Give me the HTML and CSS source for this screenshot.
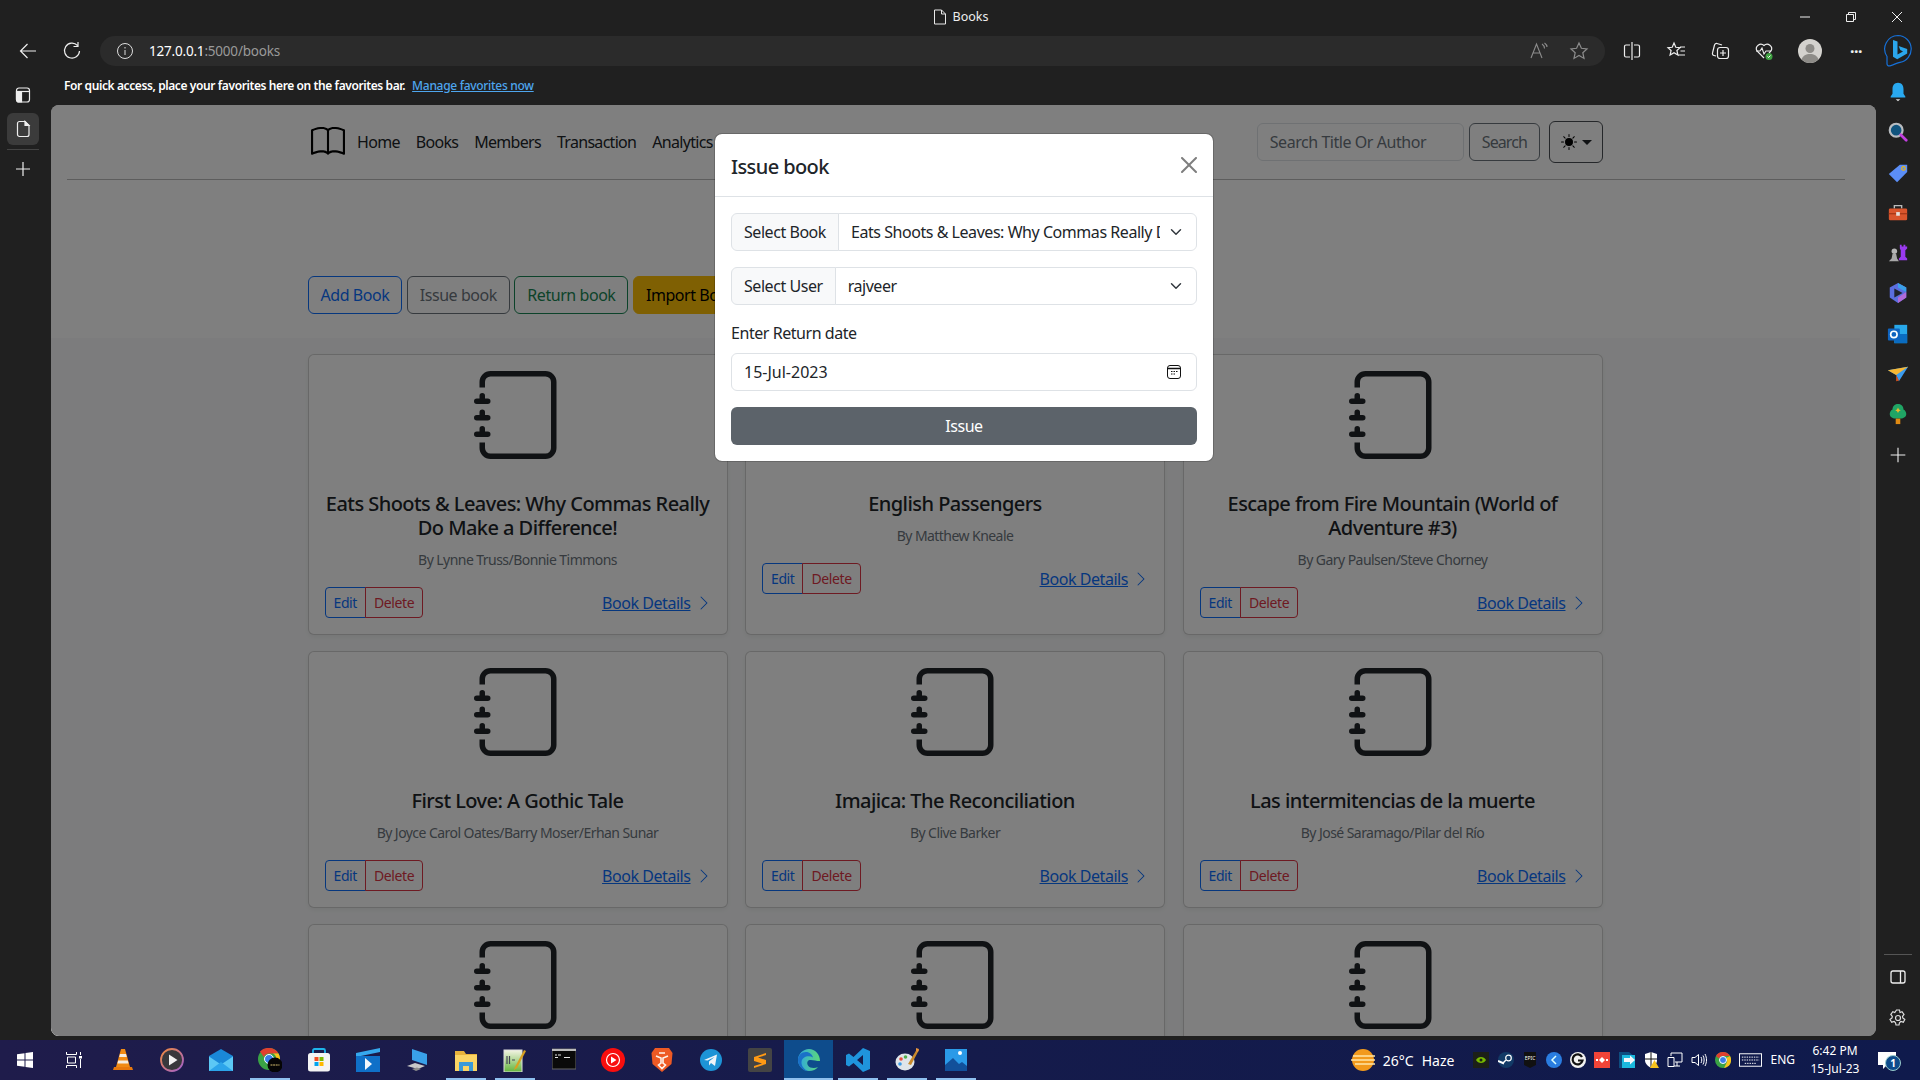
FILE: index.html
```html
<!DOCTYPE html>
<html lang="en">
<head>
    <meta charset="UTF-8">
    <meta name="viewport" content="width=device-width, initial-scale=1.0">
    <title>Books</title>
    <link rel="stylesheet" href="styles.css">
</head>
<body>
    <svg class="defs" width="0" height="0">
        <defs>
            <linearGradient id="ring" x1="0" y1="0" x2="1" y2="1"><stop offset="0" stop-color="#f08a3c"/><stop offset="1" stop-color="#a060d0"/></linearGradient>
            <linearGradient id="notepad" x1="0" y1="0" x2="0" y2="1"><stop offset="0" stop-color="#f4f4e4"/><stop offset="1" stop-color="#62b53a"/></linearGradient>
            <linearGradient id="edge" x1="0" y1="0" x2="1" y2="0"><stop offset="0" stop-color="#2fa8e0"/><stop offset="1" stop-color="#5cd87a"/></linearGradient>
        </defs>
        <symbol id="journal" viewBox="0 0 16 16">
            <path d="M3 0h10a2 2 0 0 1 2 2v12a2 2 0 0 1-2 2H3a2 2 0 0 1-2-2v-1h1v1a1 1 0 0 0 1 1h10a1 1 0 0 0 1-1V2a1 1 0 0 0-1-1H3a1 1 0 0 0-1 1v1H1V2a2 2 0 0 1 2-2z"/>
            <path d="M1 5v-.5a.5.5 0 0 1 1 0V5h.5a.5.5 0 0 1 0 1h-2a.5.5 0 0 1 0-1H1zm0 3v-.5a.5.5 0 0 1 1 0V8h.5a.5.5 0 0 1 0 1h-2a.5.5 0 0 1 0-1H1zm0 3v-.5a.5.5 0 0 1 1 0v.5h.5a.5.5 0 0 1 0 1h-2a.5.5 0 0 1 0-1H1z"/>
        </symbol>
        <symbol id="chevron" viewBox="0 0 16 16">
            <path fill-rule="evenodd" d="M4.646 1.646a.5.5 0 0 1 .708 0l6 6a.5.5 0 0 1 0 .708l-6 6a.5.5 0 0 1-.708-.708L10.293 8 4.646 2.354a.5.5 0 0 1 0-.708z"/>
        </symbol>
    </svg>

    <div class="titlebar">
        <div class="title-text">
            <svg class="ico16" viewBox="0 0 16 16" fill="none" stroke="#e8e8e8"><path d="M2.500 1h7L13.500 5v10h-11zM9.500 1v4h4"/></svg>
            <span>Books</span>
        </div>
        <div class="window-controls">
            <svg viewBox="0 0 12 12" fill="none" stroke="#eee"><path d="M1 6h10"/></svg>
            <svg viewBox="0 0 12 12" fill="none" stroke="#eee"><path d="M1.500 3.500h7v7h-7zM3.500 3.500v-2h7v7h-2"/></svg>
            <svg viewBox="0 0 12 12" fill="none" stroke="#eee"><path d="M1 1l10 10M11 1L1 11"/></svg>
        </div>
    </div>

    <div class="toolbar">
        <div class="nav-buttons">
            <svg viewBox="0 0 20 20" fill="none" stroke="#eee" stroke-width="1.200"><path d="M18 10H2.500M9.500 3l-7 7 7 7"/></svg>
            <svg viewBox="0 0 20 20" fill="none" stroke="#eee" stroke-width="1.200"><path d="M15.500 4.500A7.500 7.500 0 1 0 17.500 10M16 1v4.500h-4.500"/></svg>
        </div>
        <div class="urlbar">
            <svg class="ico18" viewBox="0 0 18 18" fill="none" stroke="#ddd"><circle cx="9" cy="9" r="7.500"/><path d="M9 8v5M9 5v1.500"/></svg>
            <span class="url"><b>127.0.0.1</b>:5000/books</span>
            <svg class="ico20 url-action" viewBox="0 0 20 20" fill="none" stroke="#8c8c8c" stroke-width="1.100"><path d="M2 17L7.500 3 13 17M4 12h7M13 3c1.500 1 2.500 2.500 2.500 4.500M15.500 2c1.500 1 2.500 2.500 2.500 4"/></svg>
            <svg class="ico20 url-action" viewBox="0 0 20 20" fill="none" stroke="#8c8c8c" stroke-width="1.200"><path d="M10 2l2.400 5.300 5.600.6-4.200 3.800 1.200 5.700L10 14.500l-5 2.900 1.200-5.700L2 7.900l5.600-.6z"/></svg>
        </div>
        <div class="tool-icons">
            <svg class="ico20" viewBox="0 0 20 20" fill="none" stroke="#eee" stroke-width="1.200"><path d="M10 1v18M8 4H4a1.500 1.500 0 0 0-1.500 1.500v9A1.500 1.500 0 0 0 4 16h4M12 4h4a1.500 1.500 0 0 1 1.500 1.500v9A1.500 1.500 0 0 1 16 16h-4"/></svg>
            <svg class="ico20" viewBox="0 0 20 20" fill="none" stroke="#eee" stroke-width="1.200"><path d="M8 2l1.800 4.300 4.200.4-3.100 2.800 1 4.500L8 11.700l-3.900 2.300 1-4.500L2 6.700l4.200-.4zM14 6h5M14.500 10H19M12.500 14H19"/></svg>
            <svg class="ico20" viewBox="0 0 20 20" fill="none" stroke="#eee" stroke-width="1.200"><path d="M6 15l-2-.5a2 2 0 0 1-1.500-2.500l2-8A2 2 0 0 1 7 2.500l5 1.500"/><rect x="7.500" y="6.500" width="11" height="11" rx="2.500"/><path d="M13 9v6M10 12h6"/></svg>
            <svg class="ico20" viewBox="0 0 20 20" fill="none"><path d="M10 17L3 10a4.500 4.500 0 0 1 7-5.500A4.500 4.500 0 0 1 17 10l-2 2" stroke="#eee" stroke-width="1.200"/><path d="M2 10h4l2-3 2 6 2-3h5" stroke="#eee" stroke-width="1.100"/><circle cx="15" cy="15.500" r="3.500" fill="#3fa142"/><path d="M13.500 15.500l1 1 2-2" stroke="#fff"/></svg>
            <svg class="avatar" viewBox="0 0 24 24"><circle cx="12" cy="12" r="12" fill="#d4d2ce"/><circle cx="12" cy="9.500" r="4.500" fill="#8e8c88"/><path d="M3.500 20.500C5 16.500 8 15 12 15s7 1.500 8.500 5.500A12 12 0 0 1 3.500 20.500z" fill="#8e8c88"/></svg>
            <span class="dots">···</span>
        </div>
        <svg class="bing" viewBox="0 0 30 34" fill="none">
            <path d="M15 1.500a13.500 13.500 0 0 1 2 26.800c-3 .5-6 2.500-10 3.500-2 .4-3-.5-3-2V22.500A13.500 13.500 0 0 1 15 1.500z" stroke="#1670d8" stroke-width="1.200"/>
            <path d="M10 6l4.500 1.600v13l5.500-3.200-2.700-1.300-1.700-4.100 8.600 3v4.400l-10 5.800-4.200-2.400z" fill="#2ba6ec"/>
        </svg>
    </div>

    <div class="browser-body">
        <aside class="left-rail">
            <svg class="ico20" viewBox="0 0 20 20" fill="none" stroke="#eee" stroke-width="1.200"><rect x="3.500" y="3" width="13" height="14" rx="2.500"/><path d="M3.500 6.500h13"/><path d="M3.500 6.500h5V17H6a2.500 2.500 0 0 1-2.500-2.500z" fill="#eee"/></svg>
            <div class="rail-active">
                <svg class="ico20" viewBox="0 0 20 20" fill="none" stroke="#eee" stroke-width="1.200"><path d="M6.500 2.500h5.500l4 4v9a2 2 0 0 1-2 2H6.500a2 2 0 0 1-2-2v-11a2 2 0 0 1 2-2z"/><path d="M12 2.500l4 4h-4z" fill="#eee"/></svg>
            </div>
            <div class="rail-line"></div>
            <svg class="ico20" viewBox="0 0 20 20" fill="none" stroke="#eee" stroke-width="1.200"><path d="M10 3v14M3 10h14"/></svg>
        </aside>

        <div class="center-col">
            <div class="favbar">
                <span>For quick access, place your favorites here on the favorites bar.</span>
                <a href="#">Manage favorites now</a>
            </div>

            <main class="page">
                <div class="page-inner">
                    <header class="site-header">
                        <div class="container site-nav">
                            <svg class="logo" viewBox="0 0 16 16"><path d="M1 2.828c.885-.37 2.154-.769 3.388-.893 1.33-.134 2.458.063 3.112.752v9.746c-.935-.53-2.12-.603-3.213-.493-1.18.12-2.37.461-3.287.811V2.828zm7.5-.141c.654-.689 1.782-.886 3.112-.752 1.234.124 2.503.523 3.388.893v9.923c-.918-.35-2.107-.692-3.287-.81-1.094-.111-2.278-.039-3.213.492V2.687zM8 1.783C7.015.936 5.587.81 4.287.94c-1.514.153-3.042.672-3.994 1.105A.5.5 0 0 0 0 2.5v11a.5.5 0 0 0 .707.455c.882-.4 2.303-.881 3.68-1.02 1.409-.142 2.59.087 3.223.877a.5.5 0 0 0 .78 0c.633-.79 1.814-1.019 3.222-.877 1.378.139 2.8.62 3.681 1.02A.5.5 0 0 0 16 13.5v-11a.5.5 0 0 0-.293-.455c-.952-.433-2.48-.952-3.994-1.105C10.413.809 8.985.936 8 1.783z"/></svg>
                            <nav class="nav-links">
                                <a href="#">Home</a>
                                <a href="#">Books</a>
                                <a href="#">Members</a>
                                <a href="#">Transaction</a>
                                <a href="#">Analytics</a>
                            </nav>
                            <form class="search-form">
                                <input class="form-control search-input" type="text" placeholder="Search Title Or Author">
                                <button class="btn btn-outline-secondary" type="button">Search</button>
                            </form>
                            <button class="btn btn-outline-secondary theme-btn" type="button">
                                <svg class="ico16" viewBox="0 0 16 16"><path d="M8 12a4 4 0 1 0 0-8 4 4 0 0 0 0 8zM8 0a.5.5 0 0 1 .5.5v2a.5.5 0 0 1-1 0v-2A.5.5 0 0 1 8 0zm0 13a.5.5 0 0 1 .5.5v2a.5.5 0 0 1-1 0v-2A.5.5 0 0 1 8 13zm8-5a.5.5 0 0 1-.5.5h-2a.5.5 0 0 1 0-1h2a.5.5 0 0 1 .5.5zM3 8a.5.5 0 0 1-.5.5h-2a.5.5 0 0 1 0-1h2A.5.5 0 0 1 3 8zm10.657-5.657a.5.5 0 0 1 0 .707l-1.414 1.415a.5.5 0 1 1-.707-.708l1.414-1.414a.5.5 0 0 1 .707 0zm-9.193 9.193a.5.5 0 0 1 0 .707L3.05 13.657a.5.5 0 0 1-.707-.707l1.414-1.414a.5.5 0 0 1 .707 0zm9.193 2.121a.5.5 0 0 1-.707 0l-1.414-1.414a.5.5 0 0 1 .707-.707l1.414 1.414a.5.5 0 0 1 0 .707zM4.464 4.465a.5.5 0 0 1-.707 0L2.343 3.05a.5.5 0 1 1 .707-.707l1.414 1.414a.5.5 0 0 1 0 .708z"/></svg>
                                <span class="caret"></span>
                            </button>
                        </div>
                    </header>

                    <section class="container actions">
                        <button class="btn btn-outline-primary" type="button">Add Book</button>
                        <button class="btn btn-outline-secondary" type="button">Issue book</button>
                        <button class="btn btn-outline-success" type="button">Return book</button>
                        <button class="btn btn-warning" type="button">Import Books</button>
                    </section>

                    <section class="album">
                        <div class="container book-grid">
                            <article class="card">
                                <svg class="card-icon"><use href="#journal"/></svg>
                                <h5 class="card-title">Eats Shoots &amp; Leaves: Why Commas Really Do Make a Difference!</h5>
                                <p class="card-author">By Lynne Truss/Bonnie Timmons</p>
                                <div class="card-actions">
                                    <div class="btn-group"><a class="btn-sm edit" href="#">Edit</a><a class="btn-sm delete" href="#">Delete</a></div>
                                    <a class="details" href="#"><span>Book Details</span><svg class="ico16"><use href="#chevron"/></svg></a>
                                </div>
                            </article>
                            <article class="card">
                                <svg class="card-icon"><use href="#journal"/></svg>
                                <h5 class="card-title">English Passengers</h5>
                                <p class="card-author">By Matthew Kneale</p>
                                <div class="card-actions">
                                    <div class="btn-group"><a class="btn-sm edit" href="#">Edit</a><a class="btn-sm delete" href="#">Delete</a></div>
                                    <a class="details" href="#"><span>Book Details</span><svg class="ico16"><use href="#chevron"/></svg></a>
                                </div>
                            </article>
                            <article class="card">
                                <svg class="card-icon"><use href="#journal"/></svg>
                                <h5 class="card-title">Escape from Fire Mountain (World of Adventure #3)</h5>
                                <p class="card-author">By Gary Paulsen/Steve Chorney</p>
                                <div class="card-actions">
                                    <div class="btn-group"><a class="btn-sm edit" href="#">Edit</a><a class="btn-sm delete" href="#">Delete</a></div>
                                    <a class="details" href="#"><span>Book Details</span><svg class="ico16"><use href="#chevron"/></svg></a>
                                </div>
                            </article>
                            <article class="card">
                                <svg class="card-icon"><use href="#journal"/></svg>
                                <h5 class="card-title">First Love: A Gothic Tale</h5>
                                <p class="card-author">By Joyce Carol Oates/Barry Moser/Erhan Sunar</p>
                                <div class="card-actions">
                                    <div class="btn-group"><a class="btn-sm edit" href="#">Edit</a><a class="btn-sm delete" href="#">Delete</a></div>
                                    <a class="details" href="#"><span>Book Details</span><svg class="ico16"><use href="#chevron"/></svg></a>
                                </div>
                            </article>
                            <article class="card">
                                <svg class="card-icon"><use href="#journal"/></svg>
                                <h5 class="card-title">Imajica: The Reconciliation</h5>
                                <p class="card-author">By Clive Barker</p>
                                <div class="card-actions">
                                    <div class="btn-group"><a class="btn-sm edit" href="#">Edit</a><a class="btn-sm delete" href="#">Delete</a></div>
                                    <a class="details" href="#"><span>Book Details</span><svg class="ico16"><use href="#chevron"/></svg></a>
                                </div>
                            </article>
                            <article class="card">
                                <svg class="card-icon"><use href="#journal"/></svg>
                                <h5 class="card-title">Las intermitencias de la muerte</h5>
                                <p class="card-author">By José Saramago/Pilar del Río</p>
                                <div class="card-actions">
                                    <div class="btn-group"><a class="btn-sm edit" href="#">Edit</a><a class="btn-sm delete" href="#">Delete</a></div>
                                    <a class="details" href="#"><span>Book Details</span><svg class="ico16"><use href="#chevron"/></svg></a>
                                </div>
                            </article>
                            <article class="card card-stub"><svg class="card-icon"><use href="#journal"/></svg></article>
                            <article class="card card-stub"><svg class="card-icon"><use href="#journal"/></svg></article>
                            <article class="card card-stub"><svg class="card-icon"><use href="#journal"/></svg></article>
                        </div>
                    </section>
                </div>

                <div class="backdrop"></div>

                <div class="modal">
                    <div class="modal-header">
                        <h5 class="modal-title">Issue book</h5>
                        <svg class="modal-close" viewBox="0 0 16 16" fill="#000"><path d="M.293.293a1 1 0 0 1 1.414 0L8 6.586 14.293.293a1 1 0 1 1 1.414 1.414L9.414 8l6.293 6.293a1 1 0 0 1-1.414 1.414L8 9.414l-6.293 6.293a1 1 0 0 1-1.414-1.414L6.586 8 .293 1.707a1 1 0 0 1 0-1.414z"/></svg>
                    </div>
                    <form class="modal-body">
                        <div class="input-group">
                            <label class="input-group-text">Select Book</label>
                            <select class="form-select"><option>Eats Shoots &amp; Leaves: Why Commas Really Do Make a Difference!</option></select>
                        </div>
                        <div class="input-group">
                            <label class="input-group-text">Select User</label>
                            <select class="form-select"><option>rajveer</option></select>
                        </div>
                        <label class="form-label">Enter Return date</label>
                        <div class="date-field">
                            <input class="form-control date-input" type="text" value="15-Jul-2023">
                            <svg class="calendar" viewBox="0 0 14 14" fill="none" stroke="#111"><rect x=".5" y=".5" width="13" height="13" rx="2.500"/><path d="M.5 3.500h13" stroke-width="1.500"/><path d="M4 6.500h1.500M6.500 6.500H8M9 6.500h1.500M4 9h1.500M6.500 9H8" stroke-width="1.200"/></svg>
                        </div>
                        <button class="btn-issue" type="button">Issue</button>
                    </form>
                </div>
            </main>
        </div>

        <aside class="right-rail">
            <div class="rail-icons">
                <svg viewBox="0 0 24 24"><path d="M12 2c4 0 6 3 6 7v5l2 3v1H4v-1l2-3V9c0-4 2-7 6-7z" fill="#29a9f0"/><path d="M9.500 20h5l-2.500 2z" fill="#ddd"/></svg>
                <svg viewBox="0 0 24 24" fill="none"><circle cx="10" cy="10" r="7" stroke="#b8bcc0" stroke-width="2.400" fill="#10547e"/><path d="M15 15l6 6" stroke="#c23fe0" stroke-width="3" stroke-linecap="round"/></svg>
                <svg viewBox="0 0 24 24"><path d="M14 3h8v8L11 22 2 13z" fill="#5b8ef7"/><circle cx="18" cy="7" r="2" fill="#5b8ef7" stroke="#f5b800" stroke-width="1.200"/></svg>
                <svg viewBox="0 0 24 24"><path d="M8 7V4h8v3" fill="none" stroke="#bbb" stroke-width="1.500"/><rect x="2" y="7" width="20" height="13" rx="1.500" fill="#d9552c"/><rect x="2" y="12" width="20" height="1.500" fill="#a93a18"/><rect x="10" y="11" width="4" height="4" fill="#e6e0da"/></svg>
                <svg viewBox="0 0 24 24"><path d="M14 3h2v2h2V3h2v2h2v2l-2 2v7l2 2v2H13v-2l2-2V9l-1-2z" fill="#9a3af0"/><circle cx="8" cy="10" r="3" fill="#b5b5b5"/><path d="M6 13h4l1 5 2 3H2l3-3z" fill="#a8a8a8"/></svg>
                <svg viewBox="0 0 24 24"><path d="M12 1l9 5v11l-9 6-9-6V6z" fill="#5b6ee0"/><path d="M12 1l9 5v5l-9-5z" fill="#3aa0e8"/><path d="M12 23l9-6v-6l-9 6z" fill="#b06ad8"/><path d="M8 7l9 5-9 5z" fill="#20232e"/></svg>
                <svg viewBox="0 0 24 24"><path d="M8 2h14v20H8z" fill="#28a8ea"/><path d="M8 12h14v10H8z" fill="#0a6cc0"/><rect x="1" y="6" width="13" height="13" rx="1" fill="#0f64c0"/><circle cx="7.500" cy="12.500" r="3.500" fill="none" stroke="#fff" stroke-width="1.800"/></svg>
                <svg viewBox="0 0 24 24"><path d="M1 8l22-4-10 16-3-7z" fill="#3b9cf0"/><path d="M1 8l9 5 13-9z" fill="#f7b733"/><path d="M10 13v7l3-1z" fill="#d9531e"/></svg>
                <svg viewBox="0 0 24 24"><path d="M12 1c4 0 6 3 6 6 2 1 3 3 3 5 0 3-3 5-6 5H9c-3 0-6-2-6-5 0-2 1-4 3-5 0-3 2-6 6-6z" fill="#20a565"/><rect x="9.500" y="17" width="5" height="6" fill="#e08a12"/><path d="M12 5l1 2 2 1-2 1-1 2-1-2-2-1 2-1z" fill="#f2b92c"/></svg>
                <svg viewBox="0 0 24 24" fill="none" stroke="#eee" stroke-width="1.200"><path d="M12 4v16M4 12h16"/></svg>
            </div>
            <div class="rail-bottom">
                <div class="rail-rule"></div>
                <svg viewBox="0 0 20 20" fill="none" stroke="#eee" stroke-width="1.300"><rect x="3" y="4" width="14" height="12" rx="2"/><path d="M12.500 4v12"/></svg>
                <svg viewBox="0 0 20 20" fill="none" stroke="#ddd" stroke-width="1.200"><circle cx="10" cy="10" r="2.500"/><path d="M8.500 2h3l.5 2.500 2-.8 2 2.800-1.500 1.800.3 1.700 2 1.500-1.500 2.700-2.500-.7-1.300 1.200-.5 2.300h-3l-.5-2.300-1.300-1.200-2.500.7L2 11.500 4 10l.3-1.700L2.800 6.500l2-2.800 2 .8z"/></svg>
            </div>
        </aside>
    </div>

    <footer class="taskbar">
        <div class="task-apps">
            <span class="app"><svg class="app-small" viewBox="0 0 16 16" fill="#fff"><path d="M0 2.300l7.500-1.100v6.300H0zM8.500 1.100L16 0v7.500H8.500zM0 8.500h7.500v6.300L0 13.700zM8.500 8.500H16V16l-7.500-1.100z"/></svg></span>
            <span class="app"><svg class="app-small" viewBox="0 0 16 16" fill="none" stroke="#fff"><path d="M.5 0v2.500h10V0M.5 16v-2.500h10V16M1.500 5h8v6h-8zM14.500 0v3M14.500 7v9"/><rect x="13" y="4" width="3" height="2.500" fill="#fff" stroke="none"/></svg></span>
            <span class="app"><svg viewBox="0 0 24 24"><path d="M10 1h4l5 18H5z" fill="#f08a14"/><path d="M9 6h6l.8 3H8.200zM7.200 12.500h9.600l.8 3H6.400z" fill="#f4ece0"/><path d="M3 19h18l1 3H2z" fill="#e8780c"/></svg></span>
            <span class="app"><svg viewBox="0 0 24 24"><circle cx="12" cy="12" r="11" fill="#38383c" stroke="url(#ring)" stroke-width="1.800"/><path d="M9 6.500l8.500 5.500L9 17.500z" fill="#f2f2f2"/></svg></span>
            <span class="app"><svg viewBox="0 0 24 24"><path d="M0 8l12-7 12 7v15H0z" fill="#1a88d8"/><path d="M0 8.500l12 8 12-8V23H0z" fill="#5cc8f5"/><path d="M0 23l12-9 12 9z" fill="#2ca4ea"/></svg></span>
            <span class="app app-on"><svg viewBox="0 0 24 24"><circle cx="11" cy="11" r="11" fill="#3aa345"/><path d="M11 0a11 11 0 0 1 9.500 5.500H11A5.500 5.500 0 0 0 5.800 9L2 3.500A11 11 0 0 1 11 0z" fill="#e0402f"/><path d="M20.500 5.500A11 11 0 0 1 13 21.800l3-7a5.500 5.500 0 0 0-1-9.300z" fill="#f7c21c"/><circle cx="11" cy="11" r="4.500" fill="#3b7fea" stroke="#fff"/><circle cx="17" cy="17" r="7.500" fill="#050505"/><path d="M12.500 17h9" stroke="#d8c070" stroke-width="1" stroke-dasharray="2 .6"/></svg></span>
            <span class="app"><svg viewBox="0 0 24 24"><path d="M6 7V2.500A1.500 1.500 0 0 1 7.500 1h9A1.500 1.500 0 0 1 18 2.500V7" fill="none" stroke="#1eb4ea" stroke-width="1.800"/><rect x="1" y="5" width="22" height="18.500" rx="2.500" fill="#f4f4f4"/><rect x="7.500" y="9" width="4" height="4" fill="#f25022"/><rect x="12.500" y="9" width="4" height="4" fill="#7fba00"/><rect x="7.500" y="14" width="4" height="4" fill="#00a4ef"/><rect x="12.500" y="14" width="4" height="4" fill="#ffb900"/></svg></span>
            <span class="app"><svg viewBox="0 0 24 24"><path d="M0 5l24-5v4L0 9z" fill="#36a8ee"/><rect y="8" width="24" height="16" fill="#0f70c8"/><path d="M9 10l7 6-7 6z" fill="#f4f8fc"/></svg></span>
            <span class="app"><svg viewBox="0 0 24 24"><path d="M7 1l15 5v11L7 12z" fill="#39a0e8"/><path d="M2 18l8-3 10 3-7 3z" fill="#c8c8c8"/><path d="M7 21l5-1.500 4 1.500-5 2z" fill="#8c8c8c"/></svg></span>
            <span class="app app-on"><svg viewBox="0 0 24 24"><path d="M1 3h9l2 3h11v17H1z" fill="#e8b23c"/><path d="M1 7h22v16H1z" fill="#fbd464"/><rect x="5" y="14" width="14" height="9" fill="#3a9ad8"/><rect x="9" y="18" width="6" height="5" fill="#fbd464"/></svg></span>
            <span class="app app-on"><svg viewBox="0 0 24 24"><rect x="1" y="2" width="18" height="22" fill="url(#notepad)" stroke="#ddd"/><path d="M4 8v8M6.500 8v8M9 12h3" stroke="#445" stroke-width="1.200"/><path d="M12 19L21 2l2 1-9 17-3 2z" fill="#d8a020"/></svg></span>
            <span class="app"><svg viewBox="0 0 24 24"><rect y="1" width="24" height="20" fill="#0a0a0a" stroke="#666"/><rect y="1" width="24" height="2" fill="#bbb"/><path d="M3 7h2M6 7h3M3 9.500h3M12 9.500h6" stroke="#e8e8e8"/></svg></span>
            <span class="app"><svg viewBox="0 0 24 24"><circle cx="12" cy="12" r="12" fill="#f80e0e"/><circle cx="12" cy="12" r="6.500" fill="none" stroke="#fff" stroke-width="1.200"/><path d="M10 8.500l5.500 3.500-5.500 3.500z" fill="#fff"/></svg></span>
            <span class="app"><svg viewBox="0 0 24 24"><path d="M5 0h14l3.500 5-1 11L12 24 2.500 16l-1-11z" fill="#ee5a24"/><path d="M6 8l5 2v5l-2.500 2 3.500 3.500 3.500-3.500-2.500-2v-5l5-2M9 5h6" fill="none" stroke="#fdf2ea" stroke-width="1.600"/></svg></span>
            <span class="app"><svg viewBox="0 0 24 24"><circle cx="12" cy="12" r="11" fill="#1d94d6"/><path d="M5 12l13-5.500-2 11.500-4-3-2 2.500v-4l5.500-4.500-7 3.500z" fill="#eef4f8"/></svg></span>
            <span class="app"><svg viewBox="0 0 24 24"><rect width="24" height="24" rx="2" fill="#444"/><path d="M18 5L6 9v4l8 2.500L6 18v2l12-4v-4L10 9.500 18 7z" fill="#ff9a14"/></svg></span>
            <span class="app app-active"><svg viewBox="0 0 24 24"><path d="M23 13C23 6 18 1 12 1 6 1 1 6 1 12c0 6 5 11 11 11 4 0 7-1.500 9-4-3 1.500-8 1.500-10-1.500-1.500-2.500-.5-5 1.500-5.500 3.500-.5 6 1 10.500 1z" fill="url(#edge)"/><path d="M1 12c0-4.500 3.500-8 8-8 3.500 0 6.500 2.500 7 5.500-4-2.500-11-1-11.500 4.500-.2 3 1.500 6.500 6 9C6 22.500 1 18 1 12z" fill="#1a70c8"/></svg></span>
            <span class="app app-on"><svg viewBox="0 0 24 24"><path d="M17 0l7 3v18l-7 3-9.500-9L3 18.500 0 17V7l3-1.500L7.500 9zM17 7l-6 5 6 5z" fill="#1f94dc" fill-rule="evenodd"/></svg></span>
            <span class="app app-on"><svg viewBox="0 0 24 24"><ellipse cx="10" cy="14" rx="9.500" ry="8.500" fill="#dfe5ea"/><circle cx="6" cy="11" r="1.800" fill="#e84c3d"/><circle cx="10.500" cy="9" r="1.800" fill="#4fae4e"/><circle cx="5" cy="16" r="1.800" fill="#3a9be8"/><path d="M22 1l2 1-8 15-3-1z" fill="#c98a2c"/><path d="M21 0l3 1-1 3-2-1z" fill="#e8953c"/></svg></span>
            <span class="app app-on"><svg viewBox="0 0 24 24"><rect x="1" y="1" width="22" height="22" fill="#2a9ae8"/><path d="M1 23v-6l8-7 6 6 3-2 5 4v5z" fill="#12509a"/><circle cx="16" cy="5" r="2" fill="#fff"/></svg></span>
        </div>

        <div class="tray">
            <div class="weather">
                <svg viewBox="0 0 24 24"><circle cx="12" cy="12" r="11" fill="#f29a1c"/><path d="M2 8h22M0 12h24M4 16h20" stroke="#ffe6a6" stroke-width="1.500"/></svg>
                <span>26°C</span><span>Haze</span>
            </div>
            <div class="tray-icons">
                <svg viewBox="0 0 16 16"><rect width="16" height="16" fill="#1c2018"/><path d="M3 8c2-4 8-4 10 0-2 4-8 4-10 0z" fill="#76b900"/><circle cx="8" cy="8" r="1.500" fill="#1c2018"/></svg>
                <svg viewBox="0 0 16 16"><circle cx="8" cy="8" r="8" fill="#123a66"/><circle cx="10.500" cy="6" r="2.800" fill="none" stroke="#fff" stroke-width="1.200"/><path d="M0 9l6 2.500" stroke="#fff" stroke-width="2"/><path d="M8 8l-3 3" stroke="#fff" stroke-width="1.500"/></svg>
                <svg viewBox="0 0 16 16"><path d="M2 0h12v13l-6 3-6-3z" fill="#111"/><text x="8" y="8" class="epic-mark">EPIC</text></svg>
                <svg viewBox="0 0 16 16"><circle cx="8" cy="8" r="8" fill="#2a7de1"/><path d="M10 4L6 8l4 4" fill="none" stroke="#dff" stroke-width="1.500"/></svg>
                <svg viewBox="0 0 16 16"><circle cx="8" cy="8" r="8" fill="#f2f2f2"/><path d="M12 5a5 5 0 1 0 .5 3.500H8" fill="none" stroke="#111" stroke-width="2.200"/></svg>
                <svg viewBox="0 0 16 16"><rect width="16" height="16" fill="#f04438"/><path d="M8 5l3 3-3 3-3-3z" fill="#fff"/><path d="M2 8h2M12 8h2" stroke="#fff" stroke-width="2"/></svg>
                <svg viewBox="0 0 16 16"><path d="M0 0h10l6 5v11H0z" fill="#0d4d80"/><rect x="3" y="3" width="13" height="13" fill="#1ab8de"/><path d="M5 6h6V3.500l5 4.500-5 4.500V10H5z" fill="#f2f6fa"/></svg>
                <svg viewBox="0 0 16 16"><path d="M8 0l6 2v6c0 4-3 6-6 8-3-2-6-4-6-8V2z" fill="#fff"/><path d="M8 0v16M2 7h12" stroke="#111"/><path d="M11.500 8l4.500 8H7z" fill="#f7c21c"/></svg>
                <svg viewBox="0 0 16 16" fill="none" stroke="#fff"><path d="M4 4V1h11v9H8M1 5.500h6v9H1zM7 14h6M10 10v4"/></svg>
                <svg viewBox="0 0 16 16" fill="none" stroke="#fff"><path d="M1 5.500h3L7.500 2.500v11L4 10.500H1zM10 5c1 2 1 4 0 6M12 3.500c1.500 3 1.500 6 0 9M14 2c2 4 2 8 0 12"/></svg>
                <svg viewBox="0 0 16 16"><circle cx="8" cy="8" r="8" fill="#3aa345"/><path d="M8 0a8 8 0 0 1 7 4H8a4 4 0 0 0-4 2.500L1 4a8 8 0 0 1 7-4z" fill="#e0402f"/><path d="M15 4a8 8 0 0 1-6 12l3-6a4 4 0 0 0-1-4z" fill="#f7c21c"/><circle cx="8" cy="8" r="3.500" fill="#3b7fea" stroke="#fff"/></svg>
                <svg class="tray-kbd" viewBox="0 0 24 16" fill="none" stroke="#fff"><rect x=".5" y="1.500" width="23" height="13"/><path d="M3 5h18M3 8h18M6 11.500h12" stroke-dasharray="1.500 1"/></svg>
            </div>
            <span class="lang">ENG</span>
            <div class="clock"><span>6:42 PM</span><span>15-Jul-23</span></div>
            <div class="notify">
                <svg viewBox="0 0 20 20" fill="#fff"><path d="M1 2h18v13h-9l-4 4v-4H1z"/></svg>
                <span class="notify-badge">1</span>
            </div>
        </div>
    </footer>
</body>
</html>
```

FILE: styles.css
```css
* {
    box-sizing: border-box;
}

body {
    margin: 0;
    width: 1920px;
    height: 1080px;
    overflow: hidden;
    background-color: #202020;
    font-family: "Noto Sans", "Open Sans", sans-serif;
    font-size: 16px;
    line-height: 1.5;
    letter-spacing: -0.45px;
    color: #212529;
}

.defs {
    position: absolute;
}

svg {
    display: block;
    flex: none;
}

.ico16 { width: 16px; height: 16px; }
.ico18 { width: 18px; height: 18px; }
.ico20 { width: 20px; height: 20px; }

/* browser frame */
.titlebar {
    height: 34px;
    display: grid;
    grid-template-columns: 1fr auto 1fr;
    align-items: center;
    grid-auto-flow: column;
}

.title-text {
    grid-column: 2;
    display: flex;
    align-items: center;
    gap: 5px;
    color: #eee;
    font-size: 12.5px;
    letter-spacing: 0;
}

.window-controls {
    grid-column: 3;
    display: flex;
    justify-content: flex-end;
    gap: 34px;
    padding-right: 17px;
}

.window-controls svg {
    width: 12px;
    height: 12px;
}

.toolbar {
    height: 34px;
    display: flex;
    align-items: center;
    padding-left: 18px;
}

.nav-buttons {
    display: flex;
    gap: 24px;
    width: 82px;
}

.nav-buttons svg {
    width: 20px;
    height: 20px;
}

.urlbar {
    width: 1505px;
    height: 30px;
    display: flex;
    align-items: center;
    padding-left: 16px;
    padding-right: 16px;
    border-radius: 15px;
    background-color: #2b2b2b;
}

.url {
    flex: 1;
    margin-left: 15px;
    color: #9a9a9a;
    font-size: 13.500px;
    letter-spacing: -0.2px;
}

.url b {
    font-weight: 400;
    color: #fff;
}

.url-action {
    margin-left: 20px;
}

.tool-icons {
    display: flex;
    align-items: center;
    margin-left: 17px;
    gap: 24px;
}

.avatar {
    width: 24px;
    height: 24px;
}

.dots {
    width: 20px;
    color: #eee;
    font-weight: 700;
    font-size: 16px;
    text-align: center;
}

.bing {
    width: 30px;
    height: 34px;
    margin-left: 17px;
}

.browser-body {
    height: 968px;
    display: flex;
}

.left-rail {
    width: 51px;
    display: flex;
    flex-direction: column;
    align-items: center;
    padding-top: 17px;
    padding-right: 5px;
}

.rail-active {
    width: 32px;
    height: 32px;
    margin-top: 8px;
    display: flex;
    align-items: center;
    justify-content: center;
    background-color: #3b3b3b;
    border-radius: 6px;
}

.rail-line {
    width: 32px;
    height: 1px;
    margin: 4px 0 9px;
    background-color: #444;
}

.center-col {
    width: 1825px;
    display: flex;
    flex-direction: column;
}

.favbar {
    height: 37px;
    display: flex;
    align-items: center;
    gap: 7px;
    padding: 0 0 1px 13px;
    color: #fff;
    font-size: 12px;
    font-weight: 600;
    letter-spacing: -0.4px;
}

.favbar a {
    color: #4ea6ee;
    font-weight: 500;
    letter-spacing: -0.3px;
}

/* page under the modal */
.page {
    position: relative;
    height: 931px;
    overflow: hidden;
    border-radius: 8px;
    background-color: #fff;
}

.page-inner {
    padding-right: 16px;
}

.container {
    width: 1320px;
    margin: 0 auto;
    padding: 0 12px;
}

.site-header {
    height: 75px;
    margin: 0 15px 0 16px;
    border-bottom: 1px solid #bbb;
    padding-top: 16px;
}

.site-nav {
    margin-left: 228px;
    display: flex;
    align-items: center;
    padding-left: 16px;
    height: 42px;
}

.logo {
    width: 34px;
    height: 34px;
}

.nav-links {
    display: flex;
    gap: 16px;
    margin-left: 12px;
    letter-spacing: -0.7px;
}

.nav-links a {
    color: #212529;
    text-decoration: none;
}

.search-form {
    display: flex;
    gap: 5px;
    margin-left: auto;
}

.search-form .btn {
    letter-spacing: -0.9px;
}

.form-control {
    display: block;
    width: 100%;
    height: 38px;
    padding: 6px 12px;
    border: 1px solid #dee2e6;
    border-radius: 6px;
    background-color: #fff;
    color: #212529;
    font: inherit;
    letter-spacing: inherit;
}

.form-control::placeholder {
    color: #6c757d;
}

.search-input {
    width: 207px;
}

.date-input {
    letter-spacing: 0;
}

.btn {
    height: 38px;
    padding: 6px 12px;
    border: 1px solid;
    border-radius: 6px;
    background-color: transparent;
    font: inherit;
    letter-spacing: inherit;
    white-space: nowrap;
}

.btn-outline-primary { border-color: #0d6efd; color: #0d6efd; }
.btn-outline-secondary { border-color: #6c757d; color: #6c757d; }
.btn-outline-success { border-color: #198754; color: #198754; }
.btn-warning { border-color: #ffc107; background-color: #ffc107; color: #000; }

.theme-btn {
    height: 42px;
    width: 54px;
    margin-left: 9px;
    display: flex;
    align-items: center;
    justify-content: center;
    gap: 4px;
    border-color: #4a4f54;
}

.caret {
    border-top: 5px solid #212529;
    border-left: 5px solid transparent;
    border-right: 5px solid transparent;
    margin-left: 1px;
}

.actions {
    display: flex;
    gap: 4.500px;
    padding-top: 96px;
    padding-bottom: 24px;
}

.album {
    padding: 16px 0 0;
    background-color: #f8f9fa;
}

.book-grid {
    display: grid;
    grid-template-columns: repeat(3, 420px);
    column-gap: 17.500px;
    row-gap: 16px;
}

.card {
    display: flex;
    flex-direction: column;
    padding: 16px;
    border: 1px solid rgba(0, 0, 0, 0.18);
    border-radius: 6px;
    background-color: #fff;
    box-shadow: 0 2px 4px rgba(0, 0, 0, 0.05);
}

.card-stub {
    height: 280px;
}

.card-icon {
    width: 88px;
    height: 88px;
    margin: 0 auto;
    fill: #212529;
}

.card-title {
    margin: 33px 0 9px;
    font-size: 20px;
    font-weight: 500;
    line-height: 24px;
    letter-spacing: -0.55px;
    text-align: center;
}

.card-author {
    margin: 0 0 17px;
    color: #6c757d;
    font-size: 14px;
    letter-spacing: -0.55px;
    text-align: center;
}

.card-actions {
    display: flex;
    align-items: center;
    justify-content: space-between;
}

.btn-group {
    display: flex;
}

.btn-sm {
    height: 31px;
    padding: 4px 8px;
    border: 1px solid;
    font-size: 14px;
    letter-spacing: -0.4px;
    text-decoration: none;
}

.edit {
    color: #0d6efd;
    border-color: #0d6efd;
    border-radius: 4px 0 0 4px;
}

.delete {
    margin-left: -1px;
    color: #dc3545;
    border-color: #dc3545;
    border-radius: 0 4px 4px 0;
}

.details {
    display: flex;
    align-items: center;
    gap: 5px;
    margin-right: -1px;
    color: #0d6efd;
}

.details svg {
    fill: #0d6efd;
}

.backdrop {
    position: absolute;
    inset: 0;
    background-color: #000;
    opacity: 0.5;
}

/* modal */
.modal {
    position: absolute;
    top: 28px;
    left: 663px;
    width: 500px;
    border: 1px solid rgba(0, 0, 0, 0.18);
    border-radius: 8px;
    background-color: #fff;
    background-clip: padding-box;
}

.modal-header {
    display: flex;
    align-items: center;
    justify-content: space-between;
    padding: 16px;
    border-bottom: 1px solid #dee2e6;
}

.modal-title {
    margin: 0;
    padding-top: 2px;
    height: 30px;
    font-size: 20px;
    font-weight: 500;
    line-height: 30px;
    letter-spacing: -0.6px;
}

.modal-close {
    width: 16px;
    height: 16px;
    opacity: 0.5;
}

.modal-body {
    padding: 16px;
    display: block;
}

.input-group {
    display: flex;
    margin-bottom: 16px;
}

.input-group-text {
    height: 38px;
    padding: 6px 12px;
    border: 1px solid #dee2e6;
    border-radius: 6px 0 0 6px;
    background-color: #f8f9fa;
    white-space: nowrap;
}

.form-select {
    flex: 1;
    min-width: 0;
    height: 38px;
    margin-left: -1px;
    padding: 6px 36px 6px 12px;
    border: 1px solid #dee2e6;
    border-radius: 0 6px 6px 0;
    appearance: none;
    background: #fff url("data:image/svg+xml,%3csvg xmlns='http://www.w3.org/2000/svg' viewBox='0 0 16 16'%3e%3cpath fill='none' stroke='%23343a40' stroke-linecap='round' stroke-linejoin='round' stroke-width='2' d='m2 5 6 6 6-6'/%3e%3c/svg%3e") no-repeat right 12px center / 16px 12px;
    color: #212529;
    font: inherit;
    letter-spacing: inherit;
}

.form-label {
    display: block;
    margin-bottom: 8px;
}

.date-field {
    position: relative;
    margin-bottom: 16px;
}

.calendar {
    position: absolute;
    top: 12px;
    right: 16px;
    width: 14px;
    height: 14px;
}

.btn-issue {
    display: block;
    width: 100%;
    height: 38px;
    border: 0;
    border-radius: 6px;
    background-color: #5c636a;
    color: #fff;
    font: inherit;
    letter-spacing: inherit;
}

/* right side panel */
.right-rail {
    width: 44px;
    display: flex;
    flex-direction: column;
    justify-content: space-between;
    align-items: center;
    padding: 13px 0 10px;
}

.rail-icons {
    display: flex;
    flex-direction: column;
    align-items: center;
    gap: 18.300px;
}

.rail-icons svg {
    width: 22px;
    height: 22px;
}

.rail-bottom {
    display: flex;
    flex-direction: column;
    align-items: center;
    gap: 12px;
}

.rail-bottom svg {
    width: 20px;
    height: 20px;
}

.rail-bottom svg:last-child {
    margin-top: 9px;
    margin-bottom: -2px;
}

.rail-rule {
    width: 28px;
    height: 1px;
    background-color: #555;
}

/* windows taskbar */
.taskbar {
    position: relative;
    margin-top: 4px;
    height: 40px;
    display: flex;
    justify-content: space-between;
    background: linear-gradient(90deg, #1f1c4b, #151b4b 50%, #0f1a4c);
    color: #fff;
    font-size: 14px;
    letter-spacing: 0;
}

.task-apps {
    display: flex;
}

.app {
    position: relative;
    width: 49px;
    height: 40px;
    display: flex;
    align-items: center;
    justify-content: center;
}

.app svg {
    width: 24px;
    height: 24px;
}

.app .app-small {
    width: 16px;
    height: 16px;
}

.app-on::after,
.app-active::after {
    content: "";
    position: absolute;
    left: 4.500px;
    right: 4.500px;
    bottom: 0;
    height: 2px;
    background-color: #8fc0ee;
}

.app-active::after {
    left: 0;
    right: 0;
}

.app-active {
    background-color: #0e4c8c;
}

.tray {
    display: flex;
    align-items: center;
}

.weather {
    display: flex;
    align-items: center;
    gap: 8px;
    margin-right: 19px;
}

.weather svg {
    width: 24px;
    height: 24px;
}

.tray-icons {
    display: flex;
    align-items: center;
    gap: 8.200px;
}

.tray-icons svg {
    width: 16px;
    height: 16px;
}

.tray-icons .tray-kbd {
    width: 23px;
}

.epic-mark {
    fill: #fff;
    font-size: 5px;
    text-anchor: middle;
}

.lang {
    margin-left: 8px;
    font-size: 12px;
}

.clock {
    width: 66px;
    margin-left: 7px;
    display: flex;
    flex-direction: column;
    align-items: center;
    font-size: 12px;
    line-height: 18px;
}

.notify {
    position: relative;
    width: 20px;
    margin: 0 23px 0 9px;
}

.notify svg {
    width: 20px;
    height: 20px;
}

.notify-badge {
    position: absolute;
    top: 5px;
    left: 8px;
    width: 16px;
    height: 16px;
    border: 1px solid #9cc;
    border-radius: 50%;
    background-color: #0e4c8c;
    font-size: 10px;
    font-weight: 700;
    line-height: 14px;
    text-align: center;
}
```
